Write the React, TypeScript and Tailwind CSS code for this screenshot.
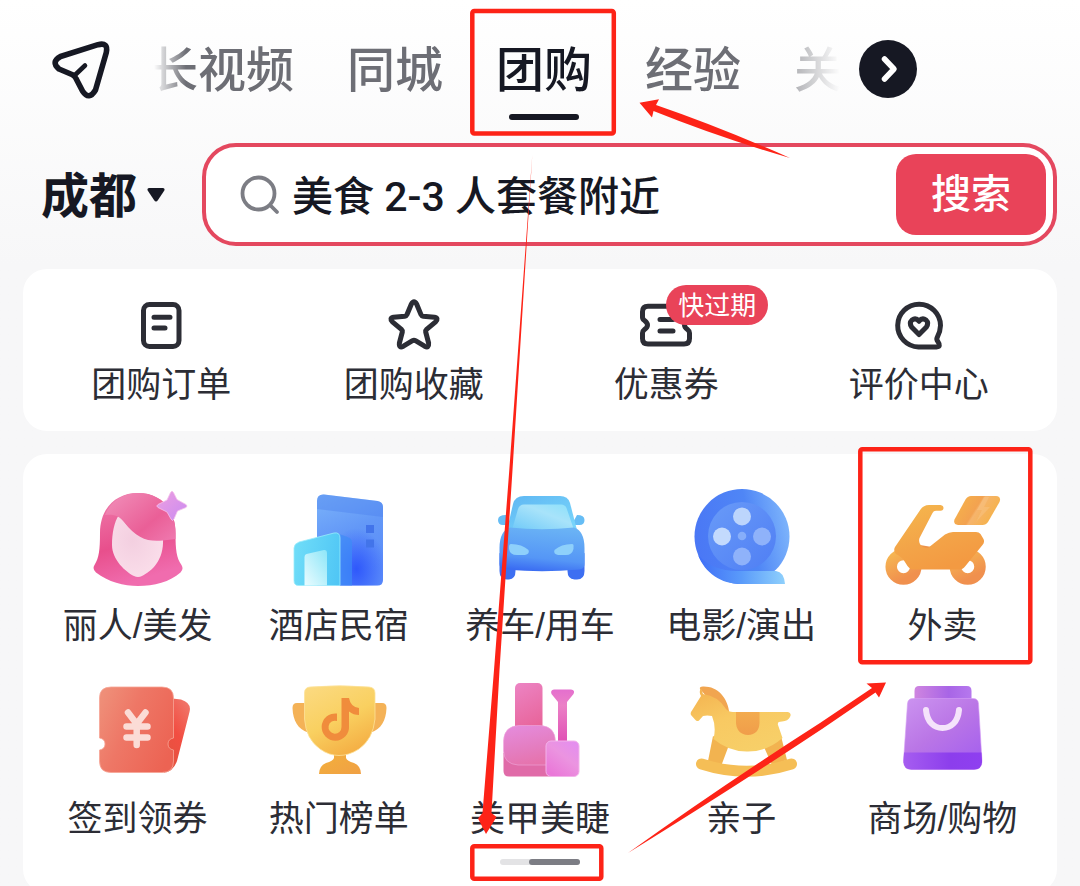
import type { ReactNode } from 'react';

const tabs = ['长视频', '同城', '团购', '经验', '关'];

function PlaneIcon() {
  return (
    <svg viewBox="0 0 58 58" className="h-[58px] w-[58px] overflow-visible" fill="none" stroke="#161823" strokeWidth="5.6" strokeLinecap="round" strokeLinejoin="round">
      <path d="M8.5 16.5 46 4.700Q56.500 2 54.300 12.500L43.500 50Q37 61 30.500 51L24 38.500Q23 36.200 20.500 34.800L7 29Q-1.500 22 8.500 16.500Z" />
      <path d="M22.500 35.500 33 25.500" strokeWidth="4.600" />
    </svg>
  );
}

function OrderIcon() {
  return (
    <svg viewBox="0 0 52 48" className="h-12 w-[52px]" fill="none" stroke="#2c2d35" strokeWidth="5" strokeLinecap="round">
      <rect x="8.500" y="3.500" width="35.500" height="42" rx="6" />
      <path d="M19 16.300h16M19 27h11" />
    </svg>
  );
}

function StarIcon() {
  return (
    <svg viewBox="0 0 52 48" className="h-12 w-[52px] overflow-visible" fill="none" stroke="#2c2d35" strokeWidth="5" strokeLinejoin="round">
      <path d="M23.300 3.200Q26 -1.500 28.700 3.200L33 13.600Q33.600 15 35.200 15.200L46.500 16.200Q51 17.200 47.600 20.800L38.600 28.400Q37.400 29.500 37.700 31L40.600 42Q41.200 47.500 36.600 45.200L27.500 39.700Q26 38.900 24.500 39.700L15.400 45.200Q10.800 47.500 11.400 42L14.300 31Q14.600 29.500 13.400 28.400L4.400 20.800Q1 17.200 5.500 16.200L16.800 15.200Q18.400 15 19 13.600Z" />
    </svg>
  );
}

function CouponIcon() {
  return (
    <svg viewBox="0 0 52 48" className="h-12 w-[52px]" fill="none" stroke="#2c2d35" strokeWidth="5" strokeLinecap="round" strokeLinejoin="round">
      <path d="M8 5.200h36q5.500 0 5.500 5.500v5.500q0 2-2 3.300q-6 4.500 0 9q2 1.500 2 3.500v5.500q0 5.500-5.500 5.500h-36q-5.500 0-5.500-5.500v-5.500q0-2 2-3.500q6-4.500 0-9q-2-1.300-2-3.300v-5.500q0-5.500 5.500-5.500Z" />
      <path d="M20 18.500h13M20 30h13" />
    </svg>
  );
}

function ReviewIcon() {
  return (
    <svg viewBox="0 0 52 48" className="h-12 w-[52px] overflow-visible" fill="none" stroke="#2c2d35" strokeWidth="5" strokeLinecap="round" strokeLinejoin="round">
      <path d="M25.500 46A21.400 21.400 0 1 1 47.500 24.500Q47.300 31 44.200 36.500Q43.200 38.400 44.800 40.500Q48.500 45.800 43.500 46Z" />
      <path d="M26 33.500 18.800 26.300Q15.800 22 19 19Q22.800 16.300 26 20.300Q29.200 16.300 33 19Q36.200 22 33.200 26.300Z" />
    </svg>
  );
}

function HairIcon() {
  return (
    <>
      <defs>
        <linearGradient id="hair" x1="0" y1="0" x2="0.3" y2="1">
          <stop offset="0" stopColor="#ef7fae" />
          <stop offset="0.6" stopColor="#e84f8c" />
          <stop offset="1" stopColor="#f06cae" />
        </linearGradient>
        <linearGradient id="fringe" x1="0" y1="0.2" x2="1" y2="1">
          <stop offset="0" stopColor="#f08ab6" />
          <stop offset="0.6" stopColor="#ea5f97" />
          <stop offset="1" stopColor="#ef7ab0" />
        </linearGradient>
        <radialGradient id="face" cx="0.4" cy="0.4" r="0.7">
          <stop offset="0" stopColor="#f3cfe0" />
          <stop offset="1" stopColor="#fbdfeb" />
        </radialGradient>
        <linearGradient id="spark" x1="0" y1="0" x2="1" y2="1">
          <stop offset="0" stopColor="#ee9fe0" />
          <stop offset="1" stopColor="#c98bf2" />
        </linearGradient>
      </defs>
      <path fill="url(#hair)" d="M50 5C28 5 12 20 12 45C12 62 11 70 6.500 77Q4 81 8 84.500C20 94 36 98 50 98C66 98 82 94 92.500 84.500Q96 81 93.500 77C88.500 70 87.500 62 87.500 45C87.500 20 72 5 50 5Z" />
      <path fill="url(#face)" d="M31 27C26 34 24 46 24 57C24 72 38 84 46 88Q50 90 54 88C64 83 76 72 75 51C58 52 44 46 31 27Z" />
      <path fill="url(#fringe)" d="M17 27C27 26 31 28 36 34C49 51 60 54 75 52.500L87.500 51V45C87.500 20 72 5 50 5C36 5 22 13 17 27Z" />
      <path fill="url(#spark)" stroke="#f5c3ea" strokeWidth="0.8" d="M82.500 4.500Q84 2 85.500 4.500L89 11.500 98 16.500Q100 18 98 19.500L89.500 23 86 31Q84.500 34 83 31L79 24 70 19.500Q67.500 18 70 16.500L79 12Z" />
    </>
  );
}

function HotelIcon() {
  return (
    <>
      <defs>
        <linearGradient id="tower" x1="0" y1="0" x2="0.3" y2="1">
          <stop offset="0" stopColor="#7cb4fa" />
          <stop offset="0.5" stopColor="#6398f7" />
          <stop offset="1" stopColor="#5b8cfa" />
        </linearGradient>
        <radialGradient id="towerGlow" cx="0.6" cy="0.82" r="0.45">
          <stop offset="0" stopColor="#2f58fb" />
          <stop offset="1" stopColor="#2f58fb" stopOpacity="0" />
        </radialGradient>
        <linearGradient id="lobby" x1="0" y1="0.5" x2="1" y2="0.7">
          <stop offset="0" stopColor="#6edcf8" />
          <stop offset="1" stopColor="#50c6f5" />
        </linearGradient>
        <linearGradient id="door" x1="1" y1="0" x2="0" y2="1">
          <stop offset="0" stopColor="#8ee6f8" />
          <stop offset="1" stopColor="#eafcff" />
        </linearGradient>
      </defs>
      <path fill="url(#tower)" d="M35 6.500 88.500 13Q94 14 94 19V92Q94 97.500 88.500 97.500H28V13Q28 6 35 6.500Z" />
      <path fill="url(#towerGlow)" d="M35 6.500 88.500 13Q94 14 94 19V92Q94 97.500 88.500 97.500H28V13Q28 6 35 6.500Z" />
      <path fill="#4a7fee" opacity="0.4" d="M35 6.500 88.500 13Q94 14 94 19V29L28 21V13Q28 6 35 6.500Z" />
      <path fill="#4274ea" d="M77 37h8v8h-8zM77 51.500h8v8h-8z" />
      <path fill="#3d8cf6" opacity="0.7" d="M47 45 56 48Q63 50 63 54V97.500H47Z" />
      <path fill="url(#lobby)" stroke="#9becfb" strokeWidth="0.8" d="M10 54 45 45Q51 44 51 50V97.500H9.500Q5 97.500 5 92.500V60Q5 56 10 54Z" />
      <path fill="url(#door)" d="M17.500 66 35 62Q38 61.500 38 64.500V97.500H15.500V69Q15.500 66.500 17.500 66Z" />
    </>
  );
}

function CarIcon() {
  return (
    <>
      <defs>
        <linearGradient id="cabin" x1="0" y1="0" x2="1" y2="1">
          <stop offset="0" stopColor="#5fb7f3" />
          <stop offset="1" stopColor="#7ad7fb" />
        </linearGradient>
        <linearGradient id="glass" x1="0" y1="1" x2="1" y2="0">
          <stop offset="0" stopColor="#6fc9f8" />
          <stop offset="0.6" stopColor="#a8e3fa" />
          <stop offset="1" stopColor="#8be0fa" />
        </linearGradient>
        <linearGradient id="body" x1="0.6" y1="0" x2="0.4" y2="1">
          <stop offset="0" stopColor="#6ab3f5" />
          <stop offset="0.7" stopColor="#5596f6" />
          <stop offset="1" stopColor="#3a6cf2" />
        </linearGradient>
      </defs>
      <path fill="#66bdf5" d="M16 27q-8 0-8 5t5 5h8zM87 27q7.500 0 7.500 5t-5 5h-8z" />
      <path fill="#3d6ff2" d="M9.500 65V83Q9.500 91.500 17 91.500H19Q25.500 91 25.500 83V74ZM94.500 65V83Q94.500 91.500 87 91.500H84.500Q77.500 91 77.500 83V74Z" />
      <path fill="url(#cabin)" d="M34 8H70Q78 8 80 15L87 42H17L23 16Q25 8 34 8Z" />
      <path fill="url(#glass)" d="M34 16.500H71Q75 16.500 76.500 20L84 42H22L28 21Q29.500 16.500 34 16.500Z" />
      <path fill="url(#body)" d="M20 39.500Q52 43 84 39.500Q94.500 43 94.500 60V76Q94.500 81 89 81.500Q52 85 15 81.500Q9.500 81 9.500 76V60Q9.500 43 20 39.500Z" />
      <path fill="#8ed0fb" d="M21 56Q19 56 19 59V61Q20 67 27 67H35Q40 66 38.500 62Q32 56 21 56ZM82 56Q84 56 83.500 59V61Q82 67 76 67H68Q63 66 64.500 62Q71 56 82 56Z" />
    </>
  );
}

function ReelIcon() {
  return (
    <>
      <defs>
        <linearGradient id="reel" x1="0" y1="0.6" x2="1" y2="0.4">
          <stop offset="0" stopColor="#4a77f5" />
          <stop offset="0.6" stopColor="#4f86f6" />
          <stop offset="1" stopColor="#7db4fb" />
        </linearGradient>
        <linearGradient id="film" x1="0" y1="0" x2="1" y2="0">
          <stop offset="0" stopColor="#3f6ef6" />
          <stop offset="0.5" stopColor="#5a9bfa" />
          <stop offset="1" stopColor="#8fd0fc" />
        </linearGradient>
        <linearGradient id="disc" x1="0" y1="0" x2="1" y2="1">
          <stop offset="0" stopColor="#699bf8" />
          <stop offset="1" stopColor="#4f7ef4" />
        </linearGradient>
      </defs>
      <circle cx="51" cy="48.500" r="47.500" fill="url(#reel)" />
      <path fill="url(#film)" d="M7 67C17 78 31 83 45 83H85Q93 84 94 96H50C30 96 14 85 7 67Z" />
      <circle cx="51" cy="48" r="34" fill="url(#disc)" />
      <circle cx="51" cy="28.500" r="9" fill="#bcd5fc" />
      <circle cx="31" cy="48.500" r="9" fill="#c3dafd" />
      <circle cx="71" cy="48.500" r="9" fill="#8fb2fa" />
      <circle cx="51" cy="68.500" r="9" fill="#8fb2fa" />
      <circle cx="51" cy="48" r="4.300" fill="#86aefa" />
    </>
  );
}

function ScooterIcon() {
  return (
    <>
      <defs>
        <linearGradient id="scooter" x1="0" y1="0" x2="0.5" y2="1">
          <stop offset="0" stopColor="#f5b84e" />
          <stop offset="0.6" stopColor="#f3a448" />
          <stop offset="1" stopColor="#f39a42" />
        </linearGradient>
        <linearGradient id="wheel" x1="0" y1="0" x2="0.5" y2="1">
          <stop offset="0" stopColor="#f6b552" />
          <stop offset="1" stopColor="#f0904e" />
        </linearGradient>
        <linearGradient id="crate" x1="0" y1="0" x2="1" y2="0.4">
          <stop offset="0" stopColor="#f6b64a" />
          <stop offset="0.550" stopColor="#f3a250" />
          <stop offset="0.600" stopColor="#f6b46c" />
          <stop offset="1" stopColor="#f5b24a" />
        </linearGradient>
      </defs>
      <circle cx="11.500" cy="78.700" r="12.300" fill="none" stroke="url(#wheel)" strokeWidth="11.500" />
      <circle cx="75.700" cy="78.700" r="12.300" fill="none" stroke="url(#wheel)" strokeWidth="11.500" />
      <path fill="#ee9348" d="M28 57 40 59 34 66Z" />
      <path fill="url(#scooter)" d="M37 17H48.500Q51.500 17.500 51.500 20T48.500 22.700H44Q41.500 22.700 40.500 25L27.500 50Q26.500 53 28 56Q30 60 36 60L53 46.500Q57 44 61 44H84Q87 44 88.500 46L91.500 51Q93 54 90.500 57L73 78.500Q71 81.500 67 81.500H22Q18 81.500 15.500 78L11 71Q8 68 4 66Q1 63 3 59L28.500 21.500Q31.500 17 37 17Z" />
      <path fill="url(#crate)" d="M79 8H104Q109.500 8.500 107.500 14L96 34Q94 37 90.500 37H66Q61 36.500 62.500 31.500L73.500 11.500Q75.500 8 79 8Z" />
      <path fill="#f9c98d" d="M92 9 85 22 90 22 84 34 98 19 92 19 97 9Z" opacity="0.4" />
    </>
  );
}

function TicketIcon() {
  return (
    <>
      <defs>
        <linearGradient id="ticket" x1="0" y1="0.2" x2="1" y2="0.7">
          <stop offset="0" stopColor="#ef8e78" />
          <stop offset="0.400" stopColor="#ee7766" />
          <stop offset="1" stopColor="#ec6353" />
        </linearGradient>
        <linearGradient id="ticketBack" x1="0.8" y1="0" x2="0.3" y2="1">
          <stop offset="0" stopColor="#f0766a" />
          <stop offset="0.5" stopColor="#f24e42" />
          <stop offset="1" stopColor="#e2543f" />
        </linearGradient>
      </defs>
      <path fill="url(#ticketBack)" d="M80 17 93 18.500Q104 22 101.500 31L89 80Q85 91 76 91.500Z" />
      <path
        fill="url(#ticket)"
        stroke="#f6a596"
        strokeWidth="0.8"
        d="M23 6H74Q85.500 6 85.500 17V57Q80 58 80 63T85.500 69V80Q85.500 91.500 74 91.500H23Q11.500 91.500 11.500 80V69Q17 68 17 63T11.500 57V17Q11.500 6 23 6Z"
      />
      <path fill="none" stroke="#fbdcd6" strokeWidth="6.500" strokeLinecap="round" d="M40 31.500 48.700 43 57.500 31.500M38.500 45.500H59.500M38.500 56.500H59.500M48.700 45V64" />
    </>
  );
}

function TrophyIcon() {
  return (
    <>
      <defs>
        <linearGradient id="cup" x1="0.2" y1="0" x2="0.7" y2="1">
          <stop offset="0" stopColor="#fbd97e" />
          <stop offset="0.5" stopColor="#f9d060" />
          <stop offset="1" stopColor="#f4ac42" />
        </linearGradient>
        <linearGradient id="base" x1="0" y1="0" x2="1" y2="1">
          <stop offset="0" stopColor="#f3b13c" />
          <stop offset="1" stopColor="#f0a044" />
        </linearGradient>
      </defs>
      <path fill="#f4b257" d="M18 22H8Q3.500 22 3.500 27C4 40 9 48 19 51.500ZM83 22H93Q97.500 22 97.500 27C97 40 92 48 82 51.500Z" />
      <path fill="url(#base)" d="M45 70H57V77Q58 80 65 82Q72 85 72 93H30Q30 85 37 82Q44 80 45 77Z" />
      <path fill="url(#cup)" stroke="#fce29a" strokeWidth="0.800" d="M21 6Q51 3.500 80 6Q86 6.500 86 12V38Q84 58 70 68Q60 74.500 50 74.500T31 68Q17 58 15.500 38V12Q15.500 6.500 21 6Z" />
      <path fill="#f08c3c" d="M52.500 17H60Q61.500 26 70 27V34Q64.500 34 60 30.500V45A13.700 13.700 0 1 1 48 32.500V40A6.500 6.500 0 1 0 52.500 46Z" />
    </>
  );
}

function NailIcon() {
  return (
    <>
      <defs>
        <linearGradient id="cap" x1="0" y1="0" x2="0.3" y2="1">
          <stop offset="0" stopColor="#ec84c4" />
          <stop offset="1" stopColor="#e8659b" />
        </linearGradient>
        <linearGradient id="bottle" x1="0.2" y1="0" x2="0.5" y2="1">
          <stop offset="0" stopColor="#e58bdc" />
          <stop offset="0.6" stopColor="#e47dc0" />
          <stop offset="1" stopColor="#e673ac" />
        </linearGradient>
        <linearGradient id="brush" x1="0" y1="0" x2="0" y2="1">
          <stop offset="0" stopColor="#e46fce" />
          <stop offset="0.300" stopColor="#eb80c6" />
          <stop offset="1" stopColor="#e04fb4" />
        </linearGradient>
        <linearGradient id="jar" x1="1" y1="0" x2="0.3" y2="1">
          <stop offset="0" stopColor="#e28df2" />
          <stop offset="0.500" stopColor="#eb94e0" />
          <stop offset="1" stopColor="#ea78d8" />
        </linearGradient>
      </defs>
      <rect x="25" y="2" width="27.500" height="50" rx="5" fill="url(#cap)" />
      <path fill="#e06ba8" d="M13.500 72V90Q13.500 95.500 19 95.500H60Q65 95.500 65 90V72Z" />
      <path fill="url(#bottle)" stroke="#f0a9de" strokeWidth="0.600" d="M29 44.500H50Q65.500 45 65.500 61V84H28Q14 83 13.500 70V60Q14 45 29 44.500Z" />
      <path fill="url(#brush)" d="M64 8.500H81Q85.500 9 83.500 13L77 21V62H68V21L61.500 13Q60 9 64 8.500Z" />
      <rect x="56" y="60" width="33" height="35.500" rx="5" fill="url(#jar)" stroke="#f3b3ea" strokeWidth="1" />
    </>
  );
}

function HorseIcon() {
  return (
    <>
      <defs>
        <linearGradient id="horse" x1="0" y1="0" x2="0.6" y2="1">
          <stop offset="0" stopColor="#f3b04e" />
          <stop offset="0.5" stopColor="#f8c962" />
          <stop offset="1" stopColor="#f7cf68" />
        </linearGradient>
        <linearGradient id="saddle" x1="0" y1="0" x2="0" y2="1">
          <stop offset="0" stopColor="#f3ab4e" />
          <stop offset="1" stopColor="#f09d4a" />
        </linearGradient>
      </defs>
      <path fill="#f2b350" d="M22 55 17 80 30.500 84 38 64ZM73 66 81 84 96 79 90 55Z" />
      <path fill="#f1a550" d="M9 8Q8 5.500 12 5.500C26 5 37 16 38.500 33L28 30Z" />
      <path
        fill="url(#horse)"
        d="M10 7 12 13Q27 15 35 28Q37.500 31 42 31H97Q101 32 99 36Q97 40 91 40.500Q86 40.500 87 44L91.500 57Q76 70.500 57 70.500Q38 71 22.500 58Q25.500 46 21 35Q16 34 12 35L8 39.500Q6 41 4 38.500L0 34Q-1 32 1 29.500L10 15Q7.500 11 10 7Z"
      />
      <path fill="url(#saddle)" d="M45 31H68.500V42Q68 53.500 57 54Q46 53.500 45 42Z" />
      <path fill="none" stroke="#f5be56" strokeWidth="11" strokeLinecap="round" d="M10.500 83Q56 97.500 100.500 83" />
    </>
  );
}

function BagIcon() {
  return (
    <>
      <defs>
        <linearGradient id="bagBack" x1="0" y1="0.5" x2="1" y2="0.5">
          <stop offset="0" stopColor="#cf85e0" />
          <stop offset="0.600" stopColor="#a865e6" />
          <stop offset="1" stopColor="#b678ee" />
        </linearGradient>
        <linearGradient id="bag" x1="0" y1="0" x2="0.8" y2="1">
          <stop offset="0" stopColor="#cc94f0" />
          <stop offset="0.500" stopColor="#ba76e6" />
          <stop offset="1" stopColor="#a560ee" />
        </linearGradient>
        <linearGradient id="bagBase" x1="0" y1="0" x2="1" y2="0">
          <stop offset="0" stopColor="#a65df0" />
          <stop offset="0.600" stopColor="#8c3eec" />
          <stop offset="1" stopColor="#8f3ff0" />
        </linearGradient>
      </defs>
      <path fill="url(#bagBack)" d="M27 5H75Q79.500 5 79.500 10V22H22.500V10Q22.500 5 27 5Z" />
      <path fill="url(#bag)" stroke="#d6a0f5" strokeWidth="0.600" d="M21 17.500H81Q86 17.500 86.500 22.500L90 80Q90 88.500 82 88.500H19.500Q11.500 88.500 11.500 80L15.500 22.500Q16 17.500 21 17.500Z" />
      <path fill="url(#bagBase)" d="M12 71.500H89.500L90 80Q90 88.500 82 88.500H19.500Q11.500 88.500 11.500 80Z" />
      <path fill="none" stroke="#f5e3fb" strokeWidth="6" strokeLinecap="round" d="M34 29C35 41 42 47 50.500 47S66 41 67 29" />
    </>
  );
}

const shortcuts: { label: string; icon: ReactNode; badge?: string }[] = [
  { label: '团购订单', icon: <OrderIcon /> },
  { label: '团购收藏', icon: <StarIcon /> },
  { label: '优惠券', icon: <CouponIcon />, badge: '快过期' },
  { label: '评价中心', icon: <ReviewIcon /> },
];

const categories: { label: string; icon: ReactNode }[] = [
  { label: '丽人/美发', icon: <HairIcon /> },
  { label: '酒店民宿', icon: <HotelIcon /> },
  { label: '养车/用车', icon: <CarIcon /> },
  { label: '电影/演出', icon: <ReelIcon /> },
  { label: '外卖', icon: <ScooterIcon /> },
  { label: '签到领券', icon: <TicketIcon /> },
  { label: '热门榜单', icon: <TrophyIcon /> },
  { label: '美甲美睫', icon: <NailIcon /> },
  { label: '亲子', icon: <HorseIcon /> },
  { label: '商场/购物', icon: <BagIcon /> },
];

/* Red boxes and arrows drawn over the page */
function Annotations() {
  return (
    <svg viewBox="0 0 1080 886" className="pointer-events-none absolute left-0 top-0 w-full" aria-hidden="true">
      <g fill="none" stroke="#fd2317" strokeWidth="4.500">
        <rect x="472.300" y="11" width="141.500" height="122.500" rx="2" />
        <rect x="860.300" y="449.300" width="170" height="213" rx="2" />
        <rect x="472.300" y="846.300" width="129" height="32.500" rx="2" />
      </g>
      <g fill="#fd2317">
        <path d="M639.500 102.700 659 99.300 656 105Q720 127 790 158Q718 137 653.500 111L652 117.500Z" />
        <path d="M532.300 155 512.500 470 499.500 670 491.500 813 496.500 817 486 834 478 818.500 482.500 813 494 670 509.300 470Z" />
        <path d="M886 682.500 866.500 683.500 872 688 820 723Q720 787 628 853Q730 790 822 729L875.500 692.500 879 697.500Z" />
      </g>
    </svg>
  );
}

export default function App() {
  return (
    <div className="relative h-screen overflow-hidden bg-[#f7f7f8] bg-linear-to-b from-white from-0% to-[#f7f7f8] to-30% font-['Liberation_Sans','Noto_Sans_CJK_SC',sans-serif] text-[#2c2d35]">
      {/* Channel tabs */}
      <header className="flex items-start pl-[52px] pt-10">
        <button type="button" aria-label="导航">
          <PlaneIcon />
        </button>
        <nav className="ml-10 flex gap-[53px] pt-0.5 font-['Roboto','Noto_Sans_CJK_SC',sans-serif] [mask-image:linear-gradient(to_right,transparent_4px,black_36px,black_calc(100%-90px),transparent_calc(100%-2px))]">
          {tabs.map((tab) => {
            const active = tab === '团购';
            return (
              <button
                key={tab}
                type="button"
                className={`flex shrink-0 flex-col items-center text-[48px] leading-[58px] font-medium ${active ? 'text-[#161823]' : 'text-[#6d6e75]'}`}
              >
                {tab}
                {active && <span className="mt-3.5 h-1.5 w-[70px] rounded-full bg-[#161823]" />}
              </button>
            );
          })}
        </nav>
        <button type="button" aria-label="更多" className="ml-[17px] flex h-[58px] w-[58px] shrink-0 items-center justify-center rounded-full bg-[#161823]">
          <svg viewBox="0 0 20 30" className="h-[30px] w-5" fill="none" stroke="#fff" strokeWidth="5.500" strokeLinecap="round" strokeLinejoin="round">
            <path d="M6.500 5 16 15 6.500 25" />
          </svg>
        </button>
      </header>

      {/* City and search */}
      <div className="mt-[23px] flex items-center pl-[41px] pr-[23px]">
        <button type="button" className="flex shrink-0 items-center gap-2.5 text-[48px] leading-[58px] font-bold text-[#161823]">
          <span className="pt-1">成都</span>
          <svg viewBox="0 0 18 14" className="h-3.5 w-[18px]" fill="#161823">
            <path d="M2 0H16Q18.500 .5 17 3L11 12Q9 15 7 12L1 3Q-.5 .5 2 0Z" />
          </svg>
        </button>
        <form className="ml-[37px] flex h-[103px] min-w-0 flex-1 items-center rounded-[34px] border-4 border-[#e4485f] bg-white pl-[34px] pr-[7px]" onSubmit={(e) => e.preventDefault()}>
          <svg viewBox="0 0 40 40" className="h-10 w-10 shrink-0" fill="none" stroke="#7c7d84" strokeWidth="3.800" strokeLinecap="round">
            <circle cx="18.500" cy="18.500" r="16" />
            <path d="M30.500 30.500 37 37" />
          </svg>
          <input
            type="text"
            aria-label="搜索"
            defaultValue="美食 2-3 人套餐附近"
            className="ml-3 min-w-0 flex-1 bg-transparent pt-1 font-['Roboto','Noto_Sans_CJK_SC',sans-serif] text-[41px] leading-[60px] font-medium text-[#161823] outline-none"
          />
          <button type="submit" className="h-[81px] w-[150px] shrink-0 rounded-[20px] bg-[#e94359] font-['Roboto','Noto_Sans_CJK_SC',sans-serif] text-[40px] font-medium text-white">
            搜索
          </button>
        </form>
      </div>

      {/* Shortcuts */}
      <section className="mx-[23px] mt-[23px] grid grid-cols-4 rounded-3xl bg-white px-3 pb-6 pt-8">
        {shortcuts.map((s) => (
          <a key={s.label} href="#" className="flex flex-col items-center gap-3.5">
            <span className="relative">
              {s.icon}
              {s.badge && (
                <span className="absolute -top-4 left-[26px] h-10 whitespace-nowrap rounded-full bg-[#e94359] px-3 text-[26px] leading-[42px] text-white">{s.badge}</span>
              )}
            </span>
            <span className="text-[35px] leading-[44px]">{s.label}</span>
          </a>
        ))}
      </section>

      {/* Categories */}
      <section className="mx-[23px] mt-[23px] rounded-3xl bg-white px-3.5 pb-7 pt-[34px]">
        <div className="grid grid-cols-5 gap-y-[33px]">
          {categories.map((c) => (
            <a key={c.label} href="#" className="flex flex-col items-center gap-4">
              <svg viewBox="0 0 100 100" className="h-[100px] w-[100px] overflow-visible">
                {c.icon}
              </svg>
              <span className="text-[35px] leading-[44px] whitespace-nowrap">{c.label}</span>
            </a>
          ))}
        </div>
        <div className="mx-auto mt-[18px] flex h-1.5 w-20 justify-end rounded-full bg-[#e3e3e5]">
          <span className="w-[51px] rounded-full bg-[#7c7d84]" />
        </div>
      </section>

      <Annotations />
    </div>
  );
}
